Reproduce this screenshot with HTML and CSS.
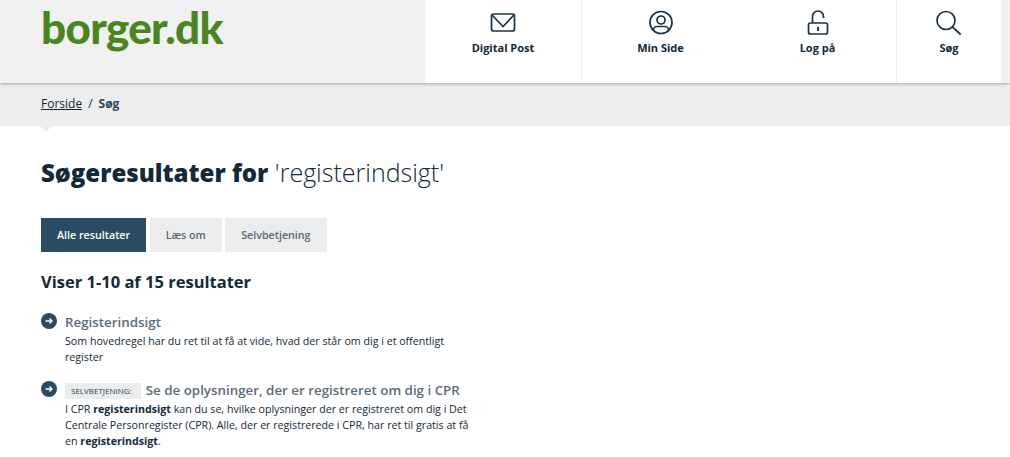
FILE: index.html
```html
<!DOCTYPE html>
<html lang="da">
<head>
    <meta charset="UTF-8">
    <title>Søg - borger.dk</title>
    <link rel="stylesheet" href="styles.css">
</head>
<body>
    <header class="site-header">
        <a class="logo" href="#">borger.dk</a>
        <nav class="top-nav">
            <a class="nav-item nav-post" href="#">
                <svg class="nav-icon" viewBox="0 0 26 26" width="26" height="26"><rect x="1.500" y="4" width="23" height="17" rx="2"/><path d="M2 5 13 16.500 24 5"/></svg>
                <span>Digital Post</span>
            </a>
            <a class="nav-item nav-side" href="#">
                <svg class="nav-icon" viewBox="0 0 26 26" width="26" height="26"><circle cx="13" cy="12.500" r="11"/><circle cx="13" cy="10" r="4"/><path d="M5.500 20.500V20a3.500 3.500 0 0 1 3.500-3.500h8a3.500 3.500 0 0 1 3.500 3.500v0.500"/></svg>
                <span>Min Side</span>
            </a>
            <a class="nav-item nav-login" href="#">
                <svg class="nav-icon" viewBox="0 0 26 26" width="26" height="26"><rect x="3.500" y="13" width="19" height="11" rx="2"/><path d="M7.500 13V6.500a5.500 5.500 0 0 1 11 0V8"/><path class="keyhole" d="M13 17v4"/></svg>
                <span>Log på</span>
            </a>
            <a class="nav-item nav-search" href="#">
                <svg class="nav-icon" viewBox="0 0 26 26" width="26" height="26"><circle cx="10" cy="10.500" r="9"/><path d="M16.500 17 24.700 24.500"/></svg>
                <span>Søg</span>
            </a>
        </nav>
    </header>

    <div class="breadcrumb">
        <a href="#">Forside</a>
        <span class="slash">/</span>
        <strong>Søg</strong>
    </div>

    <main class="content">
        <h1><strong>Søgeresultater for</strong> 'registerindsigt'</h1>

        <div class="tabs">
            <a class="tab active" href="#">Alle resultater</a>
            <a class="tab" href="#">Læs om</a>
            <a class="tab" href="#">Selvbetjening</a>
        </div>

        <h2>Viser 1-10 af 15 resultater</h2>

        <div class="result">
            <svg class="arrow" viewBox="0 0 16 16" width="16" height="16"><circle cx="8" cy="8" r="8"/><path d="M4.500 8h6.500M8.500 5.500 11 8l-2.500 2.500"/></svg>
            <div class="result-body">
                <a class="result-title" href="#">Registerindsigt</a>
                <p>Som hovedregel har du ret til at få at vide, hvad der står om dig i et offentligt register</p>
            </div>
        </div>

        <div class="result">
            <svg class="arrow" viewBox="0 0 16 16" width="16" height="16"><circle cx="8" cy="8" r="8"/><path d="M4.500 8h6.500M8.500 5.500 11 8l-2.500 2.500"/></svg>
            <div class="result-body">
                <span class="label">SELVBETJENING:</span>
                <a class="result-title" href="#">Se de oplysninger, der er registreret om dig i CPR</a>
                <p>I CPR <strong>registerindsigt</strong> kan du se, hvilke oplysninger der er registreret om dig i Det Centrale Personregister (CPR). Alle, der er registrerede i CPR, har ret til gratis at få en <strong>registerindsigt</strong>.</p>
            </div>
        </div>
    </main>
</body>
</html>
```

FILE: styles.css
```css
html, body {
    height: 457px;
    overflow: hidden;
}
body {
    margin: 0;
    font-family: "Open Sans", sans-serif;
    color: #12293a;
    background-color: white;
}
a {
    color: inherit;
    text-decoration: none;
}
.site-header {
    display: flex;
    justify-content: space-between;
    height: 83px;
    padding: 0 9px 0 41px;
    background-color: #f1f1f1;
    box-shadow: 0 1px 3px rgba(0,0,0,0.3);
    position: relative;
    z-index: 1;
}
.logo {
    font-family: Lato, sans-serif;
    font-weight: 900;
    font-size: 44px;
    line-height: 55px;
    letter-spacing: -0.7px;
    color: #4a861f;
}
.top-nav {
    display: flex;
    width: 576px;
    background-color: white;
}
.nav-item {
    display: flex;
    flex-direction: column;
    align-items: center;
    padding-top: 10px;
    font-size: 11px;
    font-weight: 700;
}
.nav-item span {
    margin-top: 4px;
}
.nav-post {
    width: 156px;
    border-right: 1px solid #efefef;
}
.nav-side {
    width: 157px;
}
.nav-login {
    width: 157px;
    border-right: 1px solid #efefef;
}
.nav-search {
    flex: 1;
}
.nav-icon {
    fill: none;
    stroke: #1c3342;
    stroke-width: 1.7;
}
.keyhole {
    stroke-width: 2;
}
.breadcrumb {
    display: flex;
    align-items: center;
    gap: 6px;
    height: 41px;
    padding: 0 0 2px 41px;
    font-size: 12px;
    background-color: #ededed;
    position: relative;
}
.breadcrumb a {
    text-decoration: underline;
}
.breadcrumb strong {
    color: #2c4a5e;
}
.breadcrumb::after {
    content: "";
    position: absolute;
    left: 40px;
    top: 43px;
    border-left: 6px solid transparent;
    border-right: 6px solid transparent;
    border-top: 6px solid #ededed;
}
.content {
    padding: 0 41px;
}
h1 {
    margin: 27px 0 0;
    font-size: 25px;
    line-height: 38px;
    font-weight: 300;
}
h1 strong {
    font-size: 24px;
    font-weight: 800;
}
.tabs {
    display: flex;
    gap: 3.500px;
    margin-top: 26px;
}
.tab {
    padding: 0 16px;
    line-height: 34px;
    font-size: 10.700px;
    font-weight: 600;
    color: #5d6873;
    background-color: #ebecee;
}
.tab.active {
    color: white;
    background-color: #294c62;
}
h2 {
    margin: 18px 0 0;
    font-size: 16.500px;
    line-height: 24px;
    font-weight: 700;
}
.result {
    display: flex;
    gap: 8px;
    width: 435px;
    margin-top: 16px;
}
.result + .result {
    margin-top: 13px;
}
.arrow {
    flex: none;
    margin-top: 3px;
    fill: #294c62;
}
.arrow path {
    fill: none;
    stroke: white;
    stroke-width: 1.4;
}
.result-title {
    font-size: 13.350px;
    line-height: 21px;
    font-weight: 600;
    color: #5c6b78;
}
.label {
    display: inline-block;
    padding: 0 9px 0 6px;
    margin-right: 1px;
    font-size: 8px;
    line-height: 16px;
    color: #2f3f4b;
    background-color: #ebecee;
    vertical-align: 1px;
}
.result-body p {
    margin: 0;
    font-size: 10.670px;
    line-height: 16px;
}
.result-body strong {
    font-weight: 700;
}
```
